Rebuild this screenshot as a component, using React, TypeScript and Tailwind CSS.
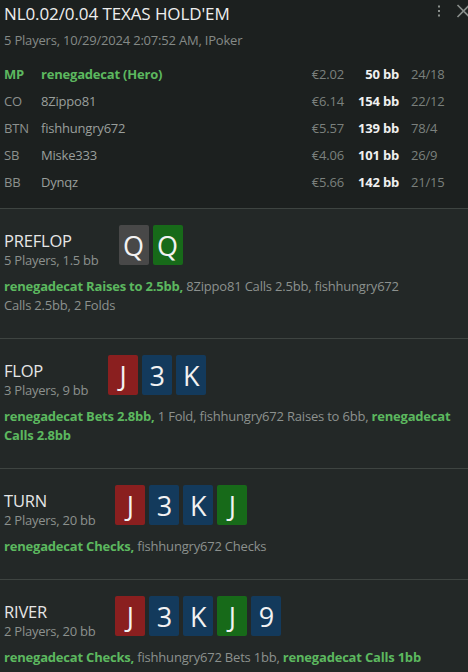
import React from "react";

interface Player {
  pos: string;
  name: string;
  money: string;
  stack: string;
  stats: string;
  hero?: boolean;
}

type Suit = "r" | "b" | "g" | "k";

interface Part {
  text: string;
  hero?: boolean;
}

interface Street {
  name: string;
  info: string;
  cards: [string, Suit][];
  actions: Part[][];
}

const players: Player[] = [
  { pos: "MP", name: "renegadecat (Hero)", money: "€2.02", stack: "50 bb", stats: "24/18", hero: true },
  { pos: "CO", name: "8Zippo81", money: "€6.14", stack: "154 bb", stats: "22/12" },
  { pos: "BTN", name: "fishhungry672", money: "€5.57", stack: "139 bb", stats: "78/4" },
  { pos: "SB", name: "Miske333", money: "€4.06", stack: "101 bb", stats: "26/9" },
  { pos: "BB", name: "Dynqz", money: "€5.66", stack: "142 bb", stats: "21/15" },
];

const board: [string, Suit][] = [
  ["J", "r"],
  ["3", "b"],
  ["K", "b"],
  ["J", "g"],
  ["9", "b"],
];

// each inner array is one action; the verb + amount part never breaks
const streets: Street[] = [
  {
    name: "PREFLOP",
    info: "5 Players, 1.5 bb",
    cards: [
      ["Q", "k"],
      ["Q", "g"],
    ],
    actions: [
      [{ text: "renegadecat", hero: true }, { text: "Raises to 2.5bb,", hero: true }],
      [{ text: "8Zippo81" }, { text: "Calls 2.5bb," }],
      [{ text: "fishhungry672" }, { text: "Calls 2.5bb," }],
      [{ text: "2 Folds" }],
    ],
  },
  {
    name: "FLOP",
    info: "3 Players, 9 bb",
    cards: board.slice(0, 3),
    actions: [
      [{ text: "renegadecat", hero: true }, { text: "Bets 2.8bb,", hero: true }],
      [{ text: "1 Fold," }],
      [{ text: "fishhungry672" }, { text: "Raises to 6bb," }],
      [{ text: "renegadecat", hero: true }, { text: "Calls 2.8bb", hero: true }],
    ],
  },
  {
    name: "TURN",
    info: "2 Players, 20 bb",
    cards: board.slice(0, 4),
    actions: [
      [{ text: "renegadecat", hero: true }, { text: "Checks,", hero: true }],
      [{ text: "fishhungry672" }, { text: "Checks" }],
    ],
  },
  {
    name: "RIVER",
    info: "2 Players, 20 bb",
    cards: board,
    actions: [
      [{ text: "renegadecat", hero: true }, { text: "Checks,", hero: true }],
      [{ text: "fishhungry672" }, { text: "Bets 1bb," }],
      [{ text: "renegadecat", hero: true }, { text: "Calls 1bb", hero: true }],
    ],
  },
];

const suitBg: Record<Suit, string> = {
  r: "bg-[#8a1f1f]",
  b: "bg-[#133a5c]",
  g: "bg-[#176a19]",
  k: "bg-[#484848]",
};

const Card = ({ rank, suit }: { rank: string; suit: Suit }) => (
  <div
    className={`${suitBg[suit]} flex h-[40px] w-[30px] items-center justify-center rounded-[2px] text-[27px] leading-none text-[#f2f2f2]`}
  >
    {rank}
  </div>
);

const StreetBlock = ({ street }: { street: Street }) => (
  <div className="border-t border-[#3e4441] bg-[#232827] px-[4px] pt-[16px] pb-[23px]">
    <div className="flex h-[40px] items-start gap-[20px]">
      <div className="flex flex-col pt-[5px]">
        <span className="text-[16.5px] leading-[21px] tracking-[-0.2px] text-[#e6e6e6]">{street.name}</span>
        <span className="text-[13px] leading-[18px] tracking-[-0.25px] text-[#8c918e]">{street.info}</span>
      </div>
      <div className="flex gap-[4px]">
        {street.cards.map(([rank, suit], i) => (
          <Card key={i} rank={rank} suit={suit} />
        ))}
      </div>
    </div>
    <p className="mt-[12px] text-[13px] leading-[19px] tracking-[-0.2px] text-[#8c918e]">
      {street.actions.map((action, i) => (
        <React.Fragment key={i}>
          {action.map((part, j) => (
            <React.Fragment key={j}>
              <span
                className={`${j > 0 ? "whitespace-nowrap" : ""} ${part.hero ? "font-bold text-[#5cb85f]" : ""}`}
              >
                {part.text}
              </span>
              {j < action.length - 1 ? " " : ""}
            </React.Fragment>
          ))}
          {i < street.actions.length - 1 ? " " : ""}
        </React.Fragment>
      ))}
    </p>
  </div>
);

export default function App() {
  return (
    <div
      className="h-[672px] w-[468px] overflow-hidden bg-[#1c201f]"
      style={{ fontFamily: '"Open Sans", "Noto Sans", sans-serif' }}
    >
      <div className="pl-[4px] pt-[2px] pb-[12px]">
        <div className="flex items-start">
          <h1 className="flex-1 text-[17px] leading-[24px] tracking-[-0.1px] text-[#eeeeee]">
            NL0.02/0.04 TEXAS HOLD'EM
          </h1>
          <div className="flex items-center gap-[15px] pt-[2px] text-[#8a8f8c]">
            <svg width="4" height="14" viewBox="0 0 4 14" fill="currentColor">
              <rect x="1" y="1.5" width="2" height="2" />
              <rect x="1" y="6" width="2" height="2" />
              <rect x="1" y="10.5" width="2" height="2" />
            </svg>
            <span className="block h-[14px] w-[12px] overflow-hidden">
              <svg width="16" height="14" viewBox="0 0 16 14" stroke="currentColor" strokeWidth="1.6" fill="none">
                <path d="M1.5 1 L13.5 13 M13.5 1 L1.5 13" />
              </svg>
            </span>
          </div>
        </div>
        <div className="mt-[4px] text-[13px] leading-[20px] tracking-[-0.2px] text-[#858a87]">
          5 Players, 10/29/2024 2:07:52 AM, IPoker
        </div>
        <div className="mt-[11px] flex flex-col pr-[25px] text-[13px] tracking-[-0.2px]">
          {players.map((p) => (
            <div key={p.pos} className="flex h-[27px] items-center">
              <span className={`w-[37px] ${p.hero ? "font-bold text-[#5cb85f]" : "text-[#8c918e]"}`}>
                {p.pos}
              </span>
              <span className={`flex-1 ${p.hero ? "font-bold text-[#5cb85f]" : "text-[#9a9f9c]"}`}>
                {p.name}
              </span>
              <span className="w-[60px] text-right text-[#7b807d]">{p.money}</span>
              <span className="w-[55px] text-right font-bold text-[#f0f0f0]">{p.stack}</span>
              <span className="ml-[12px] w-[32px] text-[#7b807d]">{p.stats}</span>
            </div>
          ))}
        </div>
      </div>
      {streets.map((s) => (
        <StreetBlock key={s.name} street={s} />
      ))}
    </div>
  );
}
